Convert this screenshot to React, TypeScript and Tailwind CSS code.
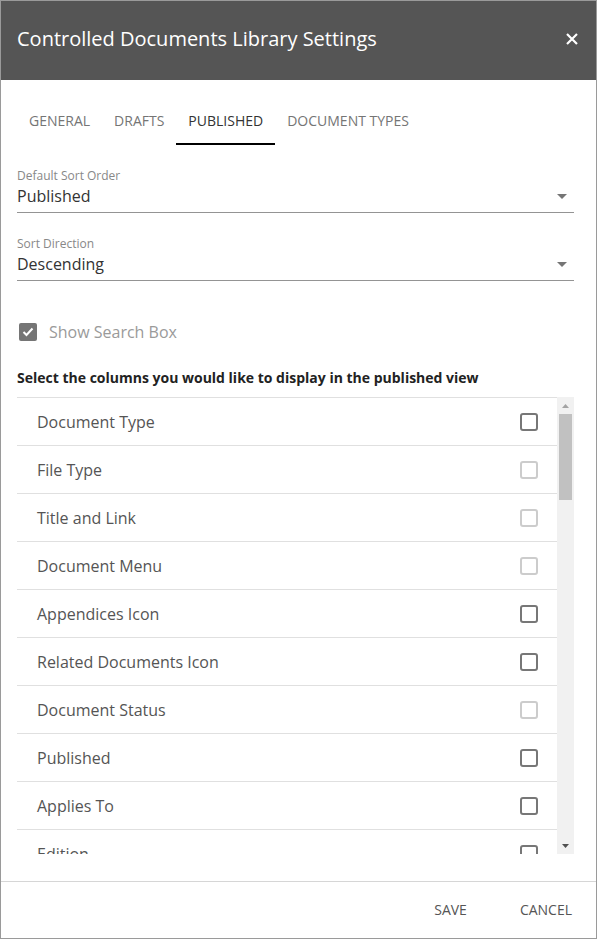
import React from 'react';

const columns = [
  { label: 'Document Type', disabled: false },
  { label: 'File Type', disabled: true },
  { label: 'Title and Link', disabled: true },
  { label: 'Document Menu', disabled: true },
  { label: 'Appendices Icon', disabled: false },
  { label: 'Related Documents Icon', disabled: false },
  { label: 'Document Status', disabled: true },
  { label: 'Published', disabled: false },
  { label: 'Applies To', disabled: false },
  { label: 'Edition', disabled: false },
];

const tabs = ['General', 'Drafts', 'Published', 'Document Types'];

function Caret() {
  return (
    <svg width="10" height="5" viewBox="0 0 10 5" className="shrink-0">
      <path d="M0 0 L10 0 L5 5 Z" fill="#757575" />
    </svg>
  );
}

function SelectField({ label, value }: { label: string; value: string }) {
  return (
    <div className="border-b border-[#949494] pb-1">
      <div className="text-[12px] leading-4 text-[#888]">{label}</div>
      <div className="flex items-center justify-between pr-[7px]">
        <span className="text-[16px] leading-6 text-[#333]">{value}</span>
        <Caret />
      </div>
    </div>
  );
}

export default function App() {
  return (
    <div
      className="w-[597px] h-[939px] border border-[#9a9a9a] bg-white flex flex-col overflow-hidden"
      style={{ fontFamily: '"Open Sans", "Liberation Sans", sans-serif' }}
    >
      <div className="h-[79px] shrink-0 bg-[#555555] flex items-center justify-between pl-4 pr-[18px]">
        <h1 className="text-[20px] text-white leading-7 -mt-[4px]">Controlled Documents Library Settings</h1>
        <button className="-mt-[4px]">
          <svg width="12" height="12" viewBox="0 0 12 12">
            <path d="M1 1 L11 11 M11 1 L1 11" stroke="#fff" strokeWidth="2.2" />
          </svg>
        </button>
      </div>

      <div className="flex-1 flex flex-col pl-4 pr-[22px]">
        <div className="flex mt-[19px] h-[46px]">
          {tabs.map(t => (
            <div
              key={t}
              className={
                t === 'Published'
                  ? 'px-[12px] flex items-center uppercase text-[14px] text-[#333] border-b-2 border-black pb-[1px]'
                  : 'px-[12px] flex items-center uppercase text-[14px] text-[#757575] border-b-2 border-transparent pb-[1px]'
              }
            >
              {t}
            </div>
          ))}
        </div>

        <div className="mt-[23px]">
          <SelectField label="Default Sort Order" value="Published" />
        </div>
        <div className="mt-[23px]">
          <SelectField label="Sort Direction" value="Descending" />
        </div>

        <div className="mt-[39px] h-6 flex items-center gap-[12px] pl-[2px]">
          <div className="w-[18px] h-[18px] rounded-[2px] bg-[#757575] flex items-center justify-center">
            <svg width="12" height="10" viewBox="0 0 12 10">
              <path d="M1.5 5 L4.5 8 L10.5 1.5" stroke="#fff" strokeWidth="2" fill="none" />
            </svg>
          </div>
          <span className="text-[16px] text-[#9a9a9a]">Show Search Box</span>
        </div>

        <div className="mt-[24px] text-[14px] leading-5 font-bold text-[#222]">
          Select the columns you would like to display in the published view
        </div>

        <div className="mt-[9px] h-[457px] flex overflow-hidden">
          <div className="flex-1 overflow-hidden">
            {columns.map(c => (
              <div
                key={c.label}
                className="h-[48px] border-t border-[#e0e0e0] flex items-center justify-between pl-5 pr-[19px]"
              >
                <span className="text-[16px] text-[#555]">{c.label}</span>
                <div
                  className={
                    c.disabled
                      ? 'w-[18px] h-[18px] rounded-[3px] border-2 border-[#cccccc]'
                      : 'w-[18px] h-[18px] rounded-[3px] border-2 border-[#777777]'
                  }
                />
              </div>
            ))}
          </div>
          <div className="w-[17px] bg-[#f1f1f1] flex flex-col items-center">
            <div className="h-[17px] flex items-center justify-center">
              <svg width="7" height="4" viewBox="0 0 7 4">
                <path d="M0 4 L7 4 L3.5 0 Z" fill="#a3a3a3" />
              </svg>
            </div>
            <div className="w-[13px] h-[86px] bg-[#c1c1c1]" />
            <div className="flex-1" />
            <div className="h-[17px] flex items-center justify-center">
              <svg width="7" height="4" viewBox="0 0 7 4">
                <path d="M0 0 L7 0 L3.5 4 Z" fill="#505050" />
              </svg>
            </div>
          </div>
        </div>
      </div>

      <div className="h-[57px] shrink-0 border-t border-[#d6d6d6] flex items-center justify-end gap-[53px] pr-[24px] pb-[2px]">
        <button className="text-[14px] uppercase text-[#555]">Save</button>
        <button className="text-[14px] uppercase text-[#555]">Cancel</button>
      </div>
    </div>
  );
}
